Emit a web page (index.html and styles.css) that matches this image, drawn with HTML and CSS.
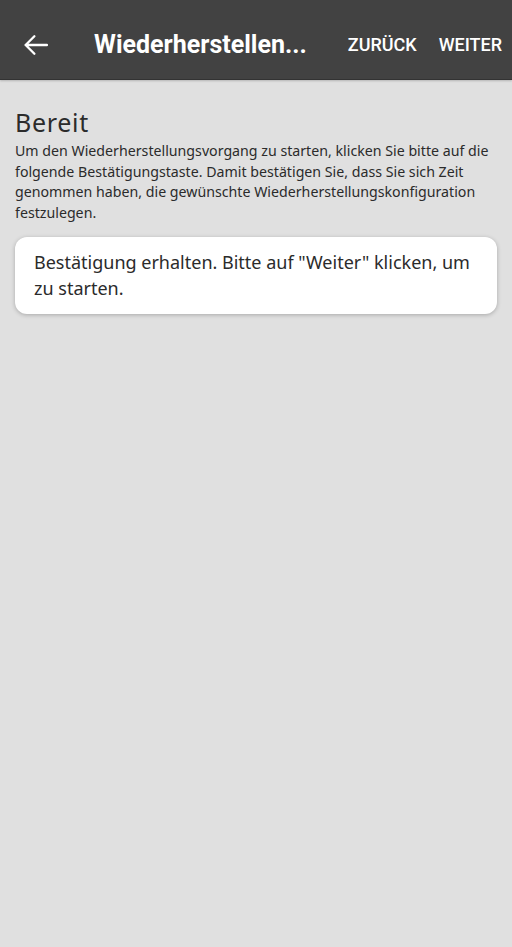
FILE: index.html
```html
<!DOCTYPE html>
<html lang="de">
<head>
  <meta charset="UTF-8">
  <title>Wiederherstellen</title>
  <link rel="stylesheet" href="styles.css">
</head>
<body>

  <div class="kopfzeile">
    <button class="zurueck-pfeil" aria-label="Zurück">
      <svg width="30" height="30" viewBox="0 0 24 24">
        <path d="M21.5 12H4.5M11.5 5l-7 7 7 7" fill="none" stroke="#fff" stroke-width="1.9" stroke-linecap="round" stroke-linejoin="round"/>
      </svg>
    </button>
    <div class="titel">Wiederherstellen...</div>
    <div class="aktionen">
      <button class="aktion">ZURÜCK</button>
      <button class="aktion">WEITER</button>
    </div>
  </div>

  <div class="inhalt">
    <h1>Bereit</h1>
    <p class="erklaerung">Um den Wiederherstellungsvorgang zu starten, klicken Sie bitte auf die folgende Bestätigungstaste. Damit bestätigen Sie, dass Sie sich Zeit genommen haben, die gewünschte Wiederherstellungskonfiguration festzulegen.</p>

    <div class="karte">
      Bestätigung erhalten. Bitte auf "Weiter" klicken, um zu starten.
    </div>
  </div>

</body>
</html>
```

FILE: styles.css
```css
html, body {
  margin: 0;
  padding: 0;
}

body {
  background-color: #e0e0e0;
  font-family: "Noto Sans", sans-serif;
  color: #2b2b2b;
  min-height: 947px;
}

.kopfzeile {
  height: 80px;
  background-color: #424242;
  border-bottom: 1px solid #333;
  box-shadow: 0 1px 2px rgba(0,0,0,0.2);
  display: flex;
  align-items: center;
  padding-top: 10px;
  box-sizing: border-box;
}

.zurueck-pfeil {
  background: none;
  border: none;
  padding: 0;
  margin-left: 20px;
  width: 30px;
  height: 30px;
  display: flex;
}

.titel {
  margin-left: 44px;
  font-family: Roboto, sans-serif;
  font-weight: 700;
  font-size: 25px;
  color: #fff;
  flex: 1;
}

.aktionen {
  display: flex;
  gap: 22px;
  margin-right: 10px;
}

.aktion {
  background: none;
  border: none;
  padding: 0;
  font-family: Roboto, sans-serif;
  font-weight: 500;
  font-size: 18px;
  color: #fff;
}

.inhalt {
  padding: 10px 15px;
}

h1 {
  font-weight: 400;
  font-size: 25px;
  letter-spacing: 0.7px;
  margin: 17px 0 0;
  line-height: 30px;
  color: #2b2b2b;
}

.erklaerung {
  font-size: 14.2px;
  line-height: 20.5px;
  margin: 4px 0 14px;
}

.karte {
  background-color: #fff;
  border-radius: 12px;
  box-shadow: 0 1px 4px rgba(0,0,0,0.25);
  padding: 12px 19px 13px;
  font-size: 18px;
  line-height: 26px;
}
```
